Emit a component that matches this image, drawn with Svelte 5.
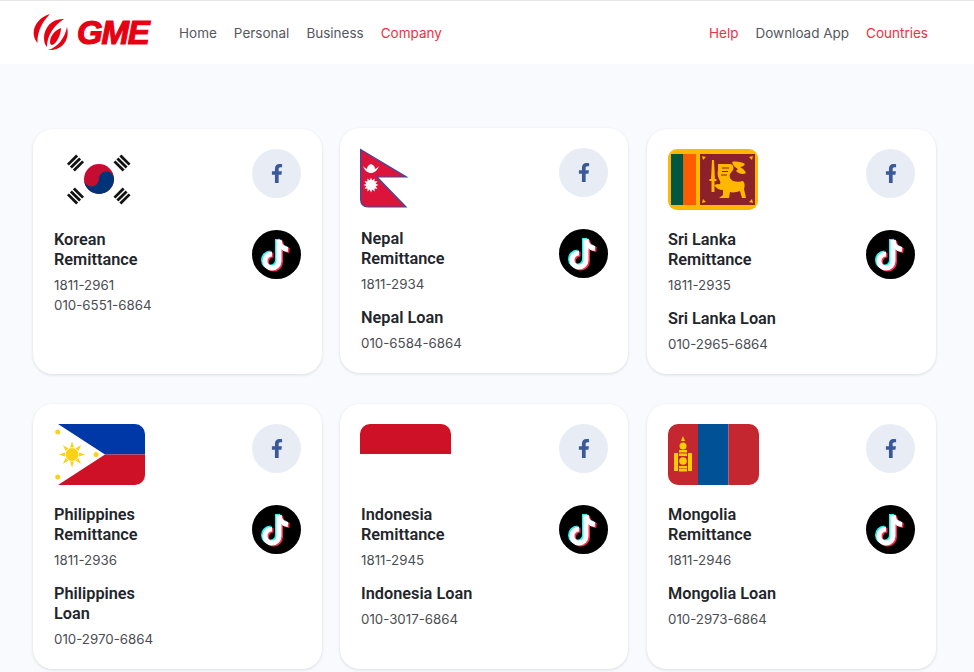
<script>
  const navLeft = [
    { label: "Home" },
    { label: "Personal" },
    { label: "Business" },
    { label: "Company", red: true }
  ];
  const navRight = [
    { label: "Help", red: true },
    { label: "Download App" },
    { label: "Countries", red: true }
  ];

  const cards = [
    { flag: "korea", title: "Korean Remittance", nums: ["1811-2961", "010-6551-6864"] },
    { flag: "nepal", title: "Nepal Remittance", nums: ["1811-2934"], loan: "Nepal Loan", loanNum: "010-6584-6864" },
    { flag: "lanka", title: "Sri Lanka Remittance", nums: ["1811-2935"], loan: "Sri Lanka Loan", loanNum: "010-2965-6864" },
    { flag: "phil", title: "Philippines Remittance", nums: ["1811-2936"], loan: "Philippines Loan", loanNum: "010-2970-6864" },
    { flag: "indo", title: "Indonesia Remittance", nums: ["1811-2945"], loan: "Indonesia Loan", loanNum: "010-3017-6864" },
    { flag: "mong", title: "Mongolia Remittance", nums: ["1811-2946"], loan: "Mongolia Loan", loanNum: "010-2973-6864" }
  ];

  const trigrams = [
    { x: 21.5, y: 14, r: -45 },
    { x: 68, y: 14, r: 45 },
    { x: 21.5, y: 47, r: 45 },
    { x: 68, y: 47, r: -45 }
  ];
  const rays = [0, 45, 90, 135, 180, 225, 270, 315];
  const sunRays = Array.from({ length: 12 }, (_, i) => i * 30);
</script>

{#snippet flagArt(name)}
  <svg class="flag" viewBox="0 0 91 61" aria-hidden="true">
    {#if name === "korea"}
      {#each trigrams as t}
        <g transform="translate({t.x} {t.y}) rotate({t.r})" fill="#111">
          <rect x="-6.5" y="-5.6" width="13" height="2.800" />
          <rect x="-6.5" y="-1.4" width="13" height="2.800" />
          <rect x="-6.5" y="2.800" width="13" height="2.800" />
        </g>
      {/each}
      <circle cx="45" cy="30" r="15" fill="#c60c30" />
      <path d="M30 30a15 15 0 0 0 30 0c0-4-3.300-7.500-7.500-7.500s-7.500 3.600-7.500 7.500-3.400 7.500-7.500 7.500-7.500-3.500-7.500-7.500z" fill="#003478" />
    {:else if name === "nepal"}
      <path d="M0.6 1.500 L46.500 29 H17 L46 59 H8 Q0.6 59 0.6 51z" fill="#dc143c" stroke="#3b4a9f" stroke-width="1.200" />
      <path d="M3 18c2 5 5 7 8 7s6-2 8-7c-1 1.500-3 2.500-4 3 0-3-2-4-4-5-2 1-4 2-4 5-1-.5-3-1.500-4-3z" fill="#fff" />
      <g transform="translate(11 37)" fill="#fff">
        <circle r="5" />
        {#each sunRays as a}
          <path d="M-1.300 -4.500L0 -7.500L1.300 -4.500z" transform="rotate({a})" />
        {/each}
      </g>
    {:else if name === "lanka"}
      <rect x="0" y="0" width="90" height="61" rx="9" fill="#ffb700" />
      <rect x="3" y="5" width="12.500" height="51" fill="#005641" />
      <rect x="15.500" y="5" width="12.500" height="51" fill="#ff5b00" />
      <rect x="32" y="5" width="55" height="51" fill="#8d2129" />
      <g fill="#ffb700">
        <path d="M44 11h2l1 20h-4z" />
        <rect x="41.500" y="30" width="7" height="2" />
        <rect x="43.500" y="32" width="3" height="11" />
        <path d="M50 15h12c3 0 4 3 3 6l-3 4c-1 3 0 5 3 7 3 1 7 1 10 0 2 2 2 5 1 8l2 9h-4l-2-7c-3 1-7 2-10 1l-1 6H51l4-3v-5c-4 0-7-2-9-5l4-1c2 1 3-1 2-3-2-3-3-7-2-11z" />
        <path d="M64 13c4-1 10 0 13 2-1 2-3 3-5 3 2 1 5 3 6 6-3 2-7 1-10-2l2-2c-2-1-5-3-6-7z" />
        <path d="M34 7l4 1-3 3zM85 7l-4 1 3 3zM34 54l4-1-3-3zM85 54l-4-1 3-3z" />
      </g>
      <path d="M54 19h7M54 22.500h6M53 26h6" stroke="#8d2129" stroke-width="1" />
    {:else if name === "phil"}
      <path d="M4 0H81a10 10 0 0 1 10 10V30.500H51z" fill="#0038a8" />
      <path d="M4 61H81a10 10 0 0 0 10-10V30.500H51z" fill="#ce1126" />
      <g transform="translate(18 30.500)" fill="#fcd116">
        <circle r="6.500" />
        {#each rays as a}
          <path d="M-2 -7L0 -13L2 -7z" transform="rotate({a})" />
        {/each}
      </g>
      <circle cx="3.700" cy="8" r="2.500" fill="#fcd116" />
      <circle cx="3.700" cy="53" r="2.500" fill="#fcd116" />
      <circle cx="42" cy="30.500" r="2.500" fill="#fcd116" />
    {:else if name === "indo"}
      <path d="M0 30V10A10 10 0 0 1 10 0H81A10 10 0 0 1 91 10V30z" fill="#ce1126" />
    {:else if name === "mong"}
      <path d="M10 0H30V61H10A10 10 0 0 1 0 51V10A10 10 0 0 1 10 0z" fill="#c4272f" />
      <rect x="30" y="0" width="30.500" height="61" fill="#015197" />
      <path d="M60.500 0H81A10 10 0 0 1 91 10V51A10 10 0 0 1 81 61H60.500z" fill="#c4272f" />
      <g fill="#f9cf02">
        <rect x="6" y="29" width="4" height="18" />
        <rect x="20" y="29" width="4" height="18" />
        <circle cx="15" cy="22" r="3.500" />
        <path d="M15 12l2 5h-4z" />
        <rect x="11" y="26" width="8" height="2.500" />
        <rect x="11" y="29.500" width="8" height="2.500" />
        <circle cx="15" cy="37" r="3.800" />
        <rect x="11" y="42" width="8" height="2.500" />
        <rect x="11" y="45" width="8" height="2.500" />
      </g>
    {/if}
  </svg>
{/snippet}

<div class="page">
  <header class="topbar">
    <div class="logo">
      <svg class="swoosh" viewBox="0 0 38 38" aria-hidden="true">
        <path d="M17 0C6 3-1 13 1 22c.5 2 1.500 5 3.500 7C4 18 9 8 17 0z" fill="#e60012" />
        <path d="M31 5C20 4 11 13 11 24c0 4 1 7 3 9 0-11 6-21 17-28z" fill="#e60012" />
        <path d="M28 14c-6 2-11 8-11 14 0 2 1 3 2 3 3 0 9-9 9-17z" fill="#e60012" />
        <path d="M34 13c3 12-4 24-19 23 9-2 17-12 19-23z" fill="#e60012" />
      </svg>
      <span class="wordmark">GME</span>
    </div>
    <nav class="nav">
      {#each navLeft as item}
        <a href="#top" class:red={item.red}>{item.label}</a>
      {/each}
    </nav>
    <nav class="nav right">
      {#each navRight as item}
        <a href="#top" class:red={item.red}>{item.label}</a>
      {/each}
    </nav>
  </header>

  <main class="grid">
    {#each cards as card, i}
      <article class="card" class:mid={i % 3 === 1} class:lifted={i === 1}>
        <div class="info">
          <div class="flag-wrap">{@render flagArt(card.flag)}</div>
          <h3>{card.title}</h3>
          <div class="nums">
            {#each card.nums as n}
              <p>{n}</p>
            {/each}
          </div>
          {#if card.loan}
            <h3 class="loan">{card.loan}</h3>
            <div class="nums"><p>{card.loanNum}</p></div>
          {/if}
        </div>
        <div class="socials">
          <span class="social fb">
            <svg viewBox="0 0 320 512" aria-hidden="true">
              <path d="M279.14 288l14.22-92.66h-88.91v-60.13c0-25.35 12.42-50.06 52.24-50.06h40.42V6.26S260.43 0 225.36 0c-73.22 0-121.08 44.38-121.08 124.72v70.62H22.89V288h81.39v224h100.17V288z" fill="#3b5998" />
            </svg>
          </span>
          <span class="social tt">
            <svg viewBox="0 0 49 49" aria-hidden="true">
              <g fill="none" stroke-width="5">
                <g stroke="#25f4ee" transform="translate(-1.500 -1)">
                  <path d="M27 10V31a7 7 0 1 1-7-7" />
                  <path d="M27 10c.5 5 4 9 9 9.500" />
                </g>
                <g stroke="#fe2c55" transform="translate(1.500 1)">
                  <path d="M27 10V31a7 7 0 1 1-7-7" />
                  <path d="M27 10c.5 5 4 9 9 9.500" />
                </g>
                <g stroke="#fff">
                  <path d="M27 10V31a7 7 0 1 1-7-7" />
                  <path d="M27 10c.5 5 4 9 9 9.500" />
                </g>
              </g>
            </svg>
          </span>
        </div>
      </article>
    {/each}
  </main>
</div>

<style>
  :global(body) {
    margin: 0;
    background: #f8fafd;
  }
  .page {
    height: 672px;
    overflow: hidden;
    background: #f8fafd;
    font-family: "Inter", "Liberation Sans", sans-serif;
  }
  .topbar {
    height: 63px;
    background: #fff;
    border-top: 1px solid #e6e6e6;
    display: flex;
    align-items: center;
    padding: 0 46px 0 33px;
  }
  .logo {
    display: flex;
    align-items: center;
    gap: 6px;
    width: 146px;
  }
  .swoosh {
    width: 38px;
    height: 38px;
    flex: none;
  }
  .wordmark {
    font-family: "Liberation Sans", sans-serif;
    font-weight: 700;
    font-style: italic;
    font-size: 33px;
    letter-spacing: -1.200px;
    color: #e60012;
    -webkit-text-stroke: 1.200px #e60012;
  }
  .nav {
    display: flex;
    gap: 17px;
  }
  .nav.right {
    margin-left: auto;
  }
  .nav a {
    font-size: 13.500px;
    color: #55585e;
    text-decoration: none;
  }
  .nav a.red {
    color: #f0303f;
  }
  .grid {
    display: grid;
    grid-template-columns: 289px 289px 289px;
    column-gap: 18px;
    row-gap: 30px;
    padding: 65px 0 0 33px;
  }
  .card {
    min-height: 245px;
    box-sizing: border-box;
    background: #fff;
    border-radius: 20px;
    box-shadow: 0 1px 3px rgba(30, 40, 60, 0.14);
    padding: 20px 21px 20px 21px;
    display: flex;
    justify-content: space-between;
  }
  .card.mid {
    margin-right: 1px;
    padding-right: 20px;
  }
  .card.lifted {
    margin-top: -1px;
    margin-bottom: 1px;
  }
  .flag-wrap {
    height: 61px;
    margin-bottom: 20px;
  }
  .mid .flag-wrap {
    margin-left: -1px;
  }
  .flag {
    display: block;
    width: 91px;
    height: 61px;
  }
  h3 {
    margin: 0;
    width: 116px;
    font-family: "Roboto", sans-serif;
    font-weight: 600;
    font-size: 16.300px;
    line-height: 20px;
    color: #22252a;
  }
  .nums {
    margin-top: 5px;
  }
  .nums p {
    margin: 0;
    font-family: "Inter", sans-serif;
    font-size: 13.300px;
    line-height: 20px;
    color: #4a4d52;
    white-space: nowrap;
  }
  .loan {
    margin-top: 14px;
  }
  .socials {
    display: flex;
    flex-direction: column;
    gap: 32px;
  }
  .social {
    width: 49px;
    height: 49px;
    border-radius: 50%;
    display: flex;
    align-items: center;
    justify-content: center;
  }
  .fb {
    background: #e8edf5;
  }
  .fb svg {
    width: 12px;
    height: 19px;
  }
  .tt {
    background: #000;
  }
  .tt svg {
    width: 49px;
    height: 49px;
  }
</style>
